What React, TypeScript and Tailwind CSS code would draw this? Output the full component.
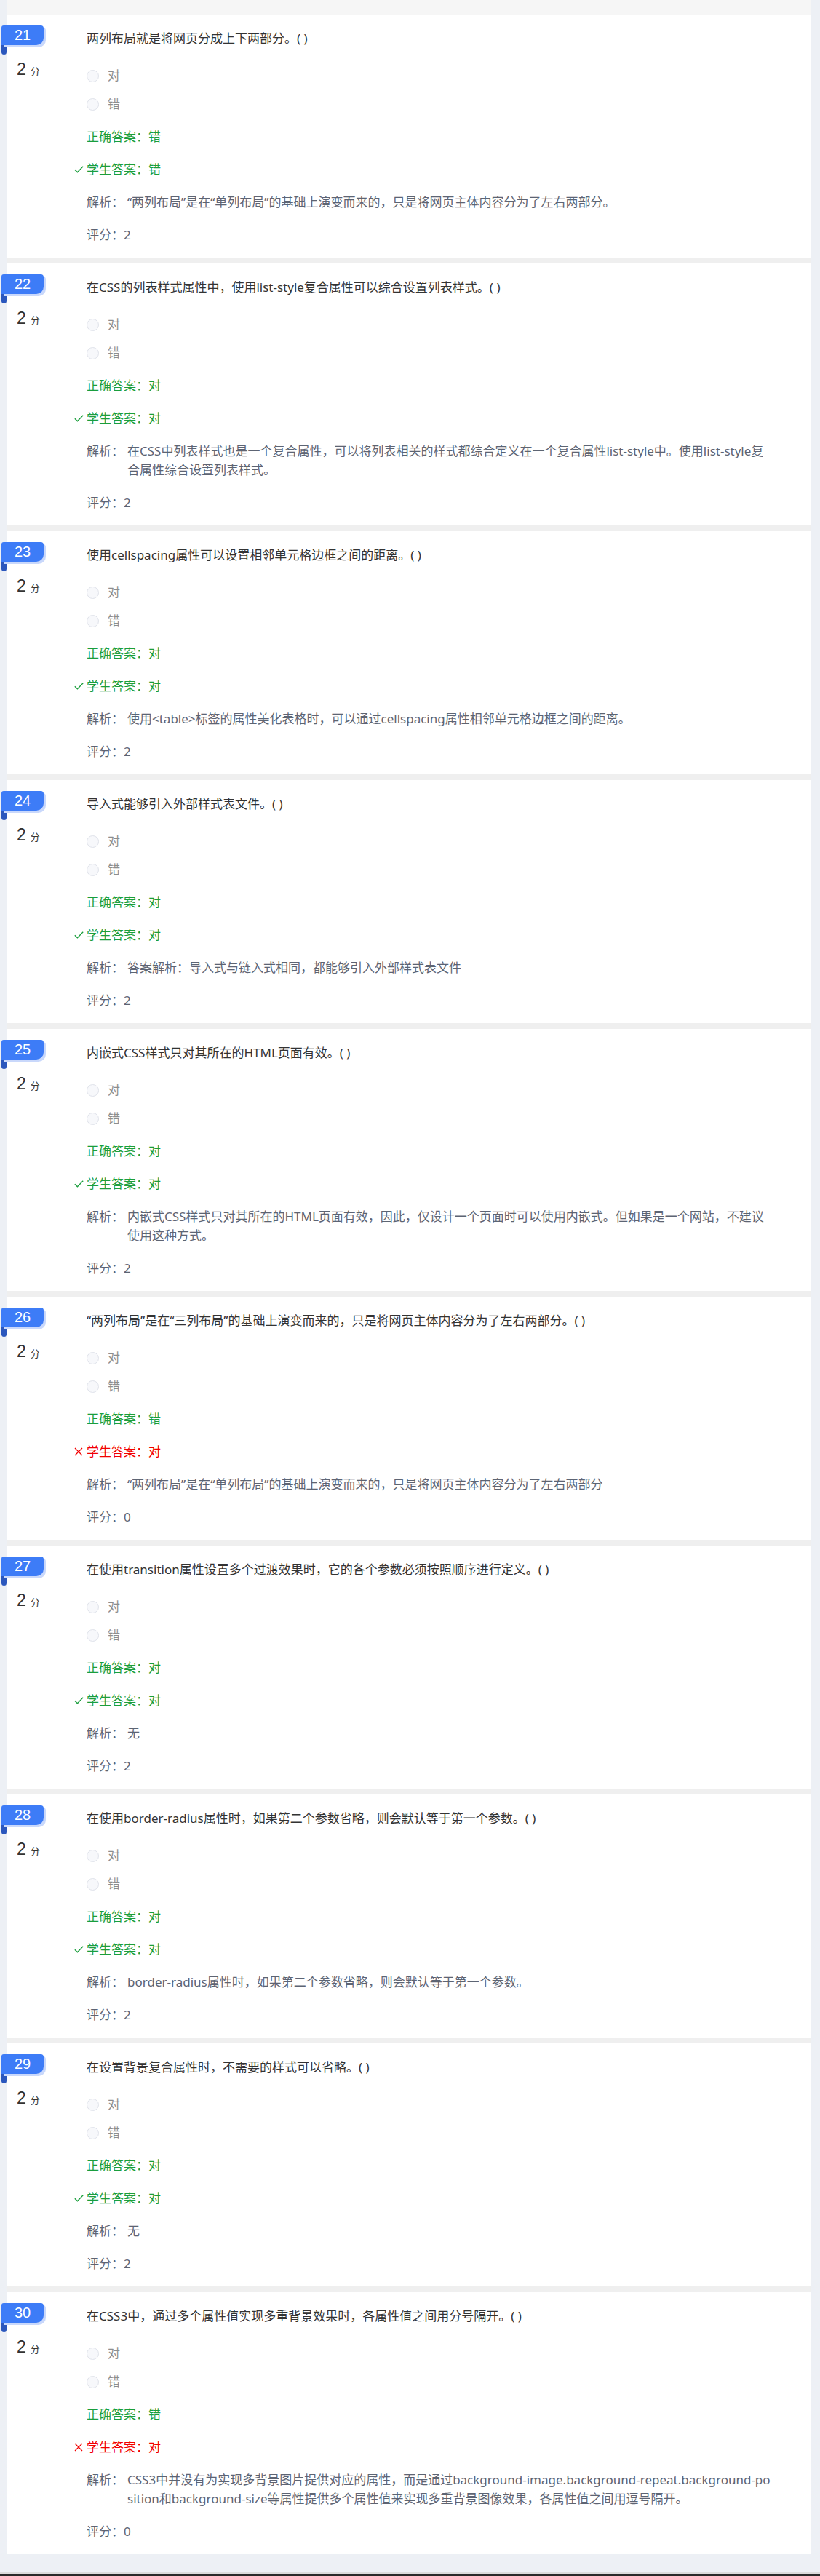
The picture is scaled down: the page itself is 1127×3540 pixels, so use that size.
import React from 'react';

type Item = {
  no: number;
  title: string;
  correct: string;
  student: string;
  analysis: string;
  score: number;
};

const items: Item[] = [
  { no: 21, title: '两列布局就是将网页分成上下两部分。( )', correct: '错', student: '错', analysis: '“两列布局”是在“单列布局”的基础上演变而来的，只是将网页主体内容分为了左右两部分。', score: 2 },
  { no: 22, title: '在CSS的列表样式属性中，使用list-style复合属性可以综合设置列表样式。( )', correct: '对', student: '对', analysis: '在CSS中列表样式也是一个复合属性，可以将列表相关的样式都综合定义在一个复合属性list-style中。使用list-style复合属性综合设置列表样式。', score: 2 },
  { no: 23, title: '使用cellspacing属性可以设置相邻单元格边框之间的距离。( )', correct: '对', student: '对', analysis: '使用<table>标签的属性美化表格时，可以通过cellspacing属性相邻单元格边框之间的距离。', score: 2 },
  { no: 24, title: '导入式能够引入外部样式表文件。( )', correct: '对', student: '对', analysis: '答案解析：导入式与链入式相同，都能够引入外部样式表文件', score: 2 },
  { no: 25, title: '内嵌式CSS样式只对其所在的HTML页面有效。( )', correct: '对', student: '对', analysis: '内嵌式CSS样式只对其所在的HTML页面有效，因此，仅设计一个页面时可以使用内嵌式。但如果是一个网站，不建议使用这种方式。', score: 2 },
  { no: 26, title: '“两列布局”是在“三列布局”的基础上演变而来的，只是将网页主体内容分为了左右两部分。( )', correct: '错', student: '对', analysis: '“两列布局”是在“单列布局”的基础上演变而来的，只是将网页主体内容分为了左右两部分', score: 0 },
  { no: 27, title: '在使用transition属性设置多个过渡效果时，它的各个参数必须按照顺序进行定义。( )', correct: '对', student: '对', analysis: '无', score: 2 },
  { no: 28, title: '在使用border-radius属性时，如果第二个参数省略，则会默认等于第一个参数。( )', correct: '对', student: '对', analysis: 'border-radius属性时，如果第二个参数省略，则会默认等于第一个参数。', score: 2 },
  { no: 29, title: '在设置背景复合属性时，不需要的样式可以省略。( )', correct: '对', student: '对', analysis: '无', score: 2 },
  { no: 30, title: '在CSS3中，通过多个属性值实现多重背景效果时，各属性值之间用分号隔开。( )', correct: '错', student: '对', analysis: 'CSS3中并没有为实现多背景图片提供对应的属性，而是通过background-image.background-repeat.background-position和background-size等属性提供多个属性值来实现多重背景图像效果，各属性值之间用逗号隔开。', score: 0 },
];

function Radio({ label }: { label: string }) {
  return (
    <div className="flex items-center h-[26px]">
      <span className="w-[17px] h-[17px] rounded-full border border-[#dfe2ea] bg-[#f7f8fb]" />
      <span className="ml-[12px] text-[#8e8e8e]">{label}</span>
    </div>
  );
}

function Card({ item }: { item: Item }) {
  const right = item.correct === item.student;
  return (
    <div className="bg-white flex pb-[18px]">
      <div className="w-[109px] shrink-0 flex flex-col">
        <div className="relative -ml-[8px] mt-[15px] w-[58px] h-[27px]">
          <div className="absolute left-0 top-[20px] w-[7px] h-[20px] rounded-b-[5px] bg-[#2b57bd]" />
          <div className="relative h-[27px] rounded-tl-[3px] rounded-tr-[4px] rounded-br-[10px] bg-[#3d7cf7] shadow-[3px_3px_0_#c9d8fb] text-white text-[20px] leading-[27px] text-center font-['Liberation_Sans',Arial,sans-serif]">
            {item.no}
          </div>
        </div>
        <div className="ml-[13px] mt-[22px] flex items-baseline text-[#333]">
          <span className="text-[23px] leading-[22px] font-['Liberation_Sans',Arial,sans-serif]">2</span>
          <span className="ml-[6px] text-[13px]">分</span>
        </div>
      </div>
      <div className="flex-1 pt-[20px] pr-[51px] flex flex-col leading-[26px]">
        <div className="text-[#333]">{item.title}</div>
        <div className="mt-[25px]">
          <Radio label="对" />
        </div>
        <div className="mt-[13px]">
          <Radio label="错" />
        </div>
        <div className="mt-[19px] text-[#1a9e3c]">正确答案：{item.correct}</div>
        <div className={`mt-[19px] -ml-[17px] flex items-center ${right ? 'text-[#1a9e3c]' : 'text-[#f20000]'}`}>
          <span className="w-[17px] h-[26px] flex items-center">
            {right ? (
              <svg width="13" height="10" viewBox="0 0 13 10" fill="none">
                <path d="M0.8 5.2 L4.4 8.8 L12.2 0.8" stroke="#1a9e3c" strokeWidth="1.3" />
              </svg>
            ) : (
              <svg width="12" height="12" viewBox="0 0 12 12" fill="none">
                <path d="M1 1 L11 11 M11 1 L1 11" stroke="#f20000" strokeWidth="1.3" />
              </svg>
            )}
          </span>
          <span>学生答案：{item.student}</span>
        </div>
        <div className="mt-[19px] flex text-[#5d6473]">
          <span className="w-[56px] shrink-0">解析：</span>
          <span className="break-all">{item.analysis}</span>
        </div>
        <div className="mt-[19px] text-[#5d6473]">评分：{item.score}</div>
      </div>
    </div>
  );
}

export default function App() {
  return (
    <div className="min-h-[3540px] bg-[#edf0f5] flex flex-col text-[17px] font-['Noto_Sans','Noto_Sans_CJK_SC',sans-serif]">
      <div className="ml-[10px] mr-[13px] bg-[#efefef]">
        <div className="h-[20px] bg-[#f6f6f6]" />
        <div className="flex flex-col gap-[8px]">
          {items.map((item) => (
            <Card key={item.no} item={item} />
          ))}
        </div>
      </div>
      <div className="flex-1" />
      <div className="h-[2px] bg-[#dcdcdc]" />
      <div className="h-[3px] bg-[#2a2a2a]" />
    </div>
  );
}
